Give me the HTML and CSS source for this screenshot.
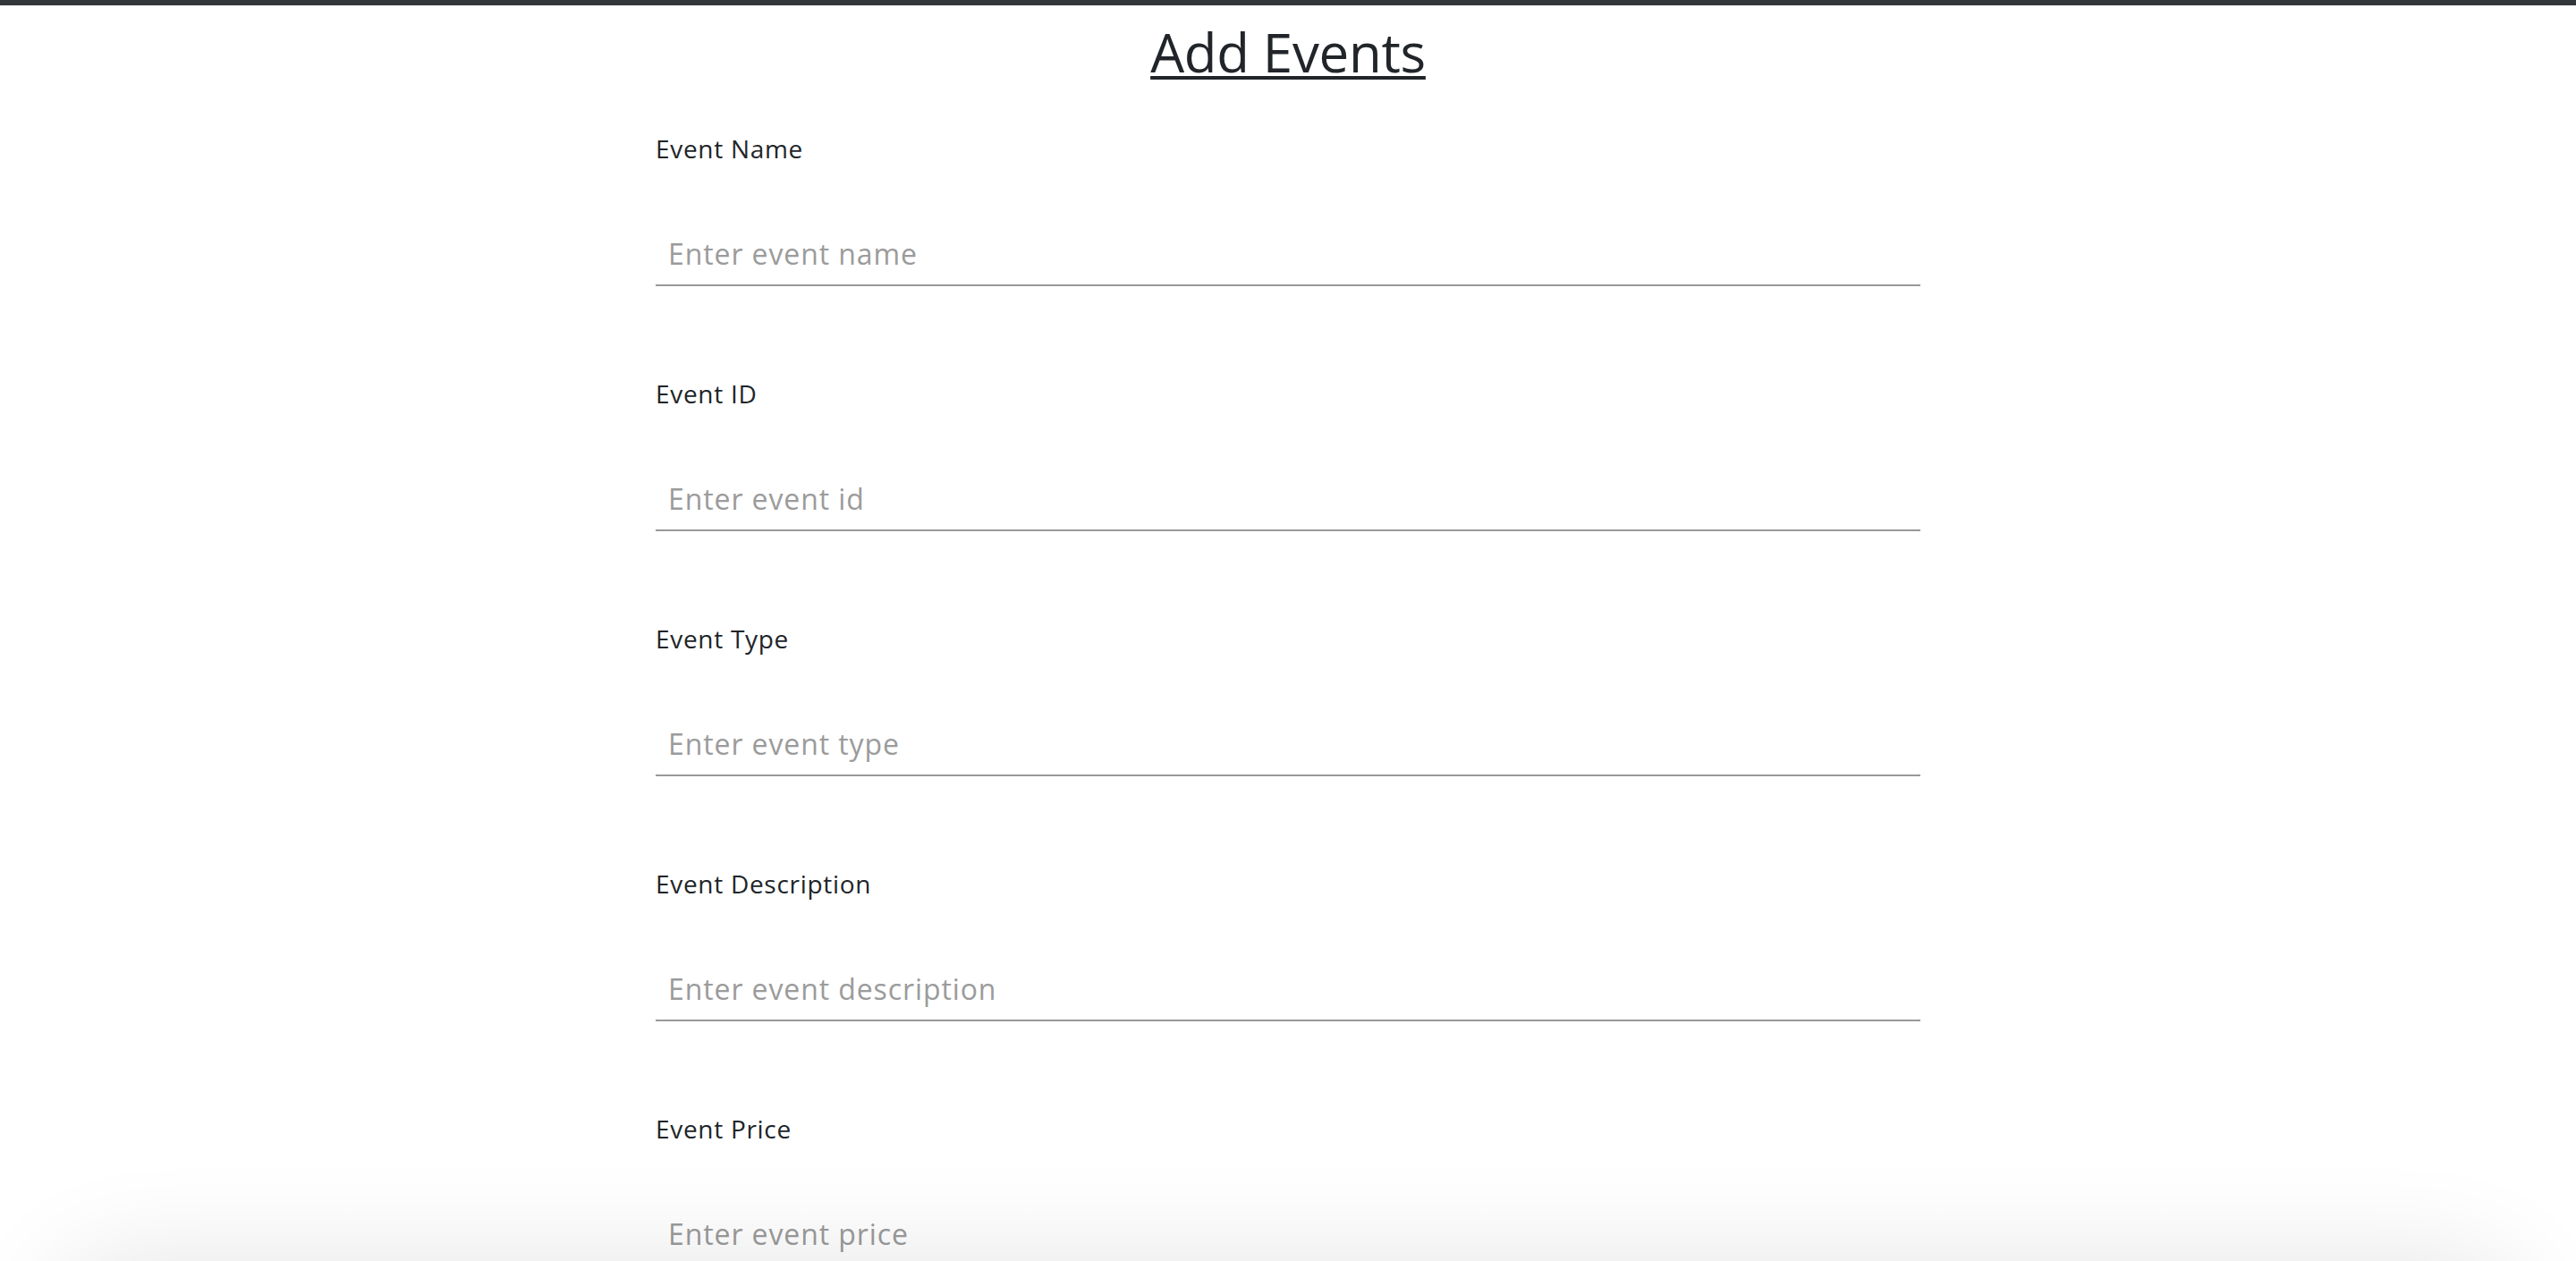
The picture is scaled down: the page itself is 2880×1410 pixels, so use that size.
FILE: index.html
```html
<!DOCTYPE html>
<html lang="en">
<head>
<meta charset="utf-8">
<title>Add Events</title>
<link rel="stylesheet" href="styles.css">
</head>
<body>
<div class="topbar"></div>
<main class="page">
  <h1 class="title">Add Events</h1>
  <form class="event-form">
    <div class="field">
      <label class="field-label" for="name">Event Name</label>
      <input class="field-input" id="name" type="text" placeholder="Enter event name">
    </div>
    <div class="field">
      <label class="field-label" for="eid">Event ID</label>
      <input class="field-input" id="eid" type="text" placeholder="Enter event id">
    </div>
    <div class="field">
      <label class="field-label" for="etype">Event Type</label>
      <input class="field-input" id="etype" type="text" placeholder="Enter event type">
    </div>
    <div class="field">
      <label class="field-label" for="edesc">Event Description</label>
      <input class="field-input" id="edesc" type="text" placeholder="Enter event description">
    </div>
    <div class="field">
      <label class="field-label" for="eprice">Event Price</label>
      <input class="field-input" id="eprice" type="text" placeholder="Enter event price">
    </div>
  </form>
</main>
<div class="bottom-shade"></div>
</body>
</html>
```

FILE: styles.css
```css
html, body {
  margin: 0;
  padding: 0;
  background: #ffffff;
}

body {
  font-family: "Open Sans", "Noto Sans", sans-serif;
  color: #212529;
}

.topbar {
  height: 6px;
  background: #33373b;
}

.page {
  width: 1414px;
  margin: 0 auto;
  display: flex;
  flex-direction: column;
}

.title {
  margin: 16px 0 0;
  font-size: 60px;
  line-height: 72px;
  font-weight: 400;
  text-align: center;
  text-decoration: underline;
  text-decoration-thickness: 4px;
  text-underline-offset: 4px;
  letter-spacing: -0.3px;
}

.event-form {
  display: flex;
  flex-direction: column;
  margin-top: 51px;
}

.field {
  display: flex;
  flex-direction: column;
  margin-bottom: 99px;
}

.field-label {
  font-size: 28px;
  line-height: 42px;
  letter-spacing: 0.7px;
  color: #212529;
  margin-bottom: 63px;
}

.field-input {
  box-sizing: content-box;
  height: 48px;
  line-height: 48px;
  padding: 10px 14px;
  margin: 0;
  border: 0;
  border-bottom: 2px solid #999999;
  border-radius: 0;
  outline: none;
  background: transparent;
  font-family: "Open Sans", "Noto Sans", sans-serif;
  font-size: 32px;
  letter-spacing: 0.9px;
  color: #212529;
}

.field-input::placeholder {
  color: #9b9b9b;
  opacity: 1;
}

.bottom-shade {
  position: fixed;
  left: 60px;
  right: 60px;
  top: 100%;
  height: 200px;
  border-radius: 80px;
  box-shadow: 0 0 120px rgba(0, 0, 0, 0.11);
  pointer-events: none;
}
```
